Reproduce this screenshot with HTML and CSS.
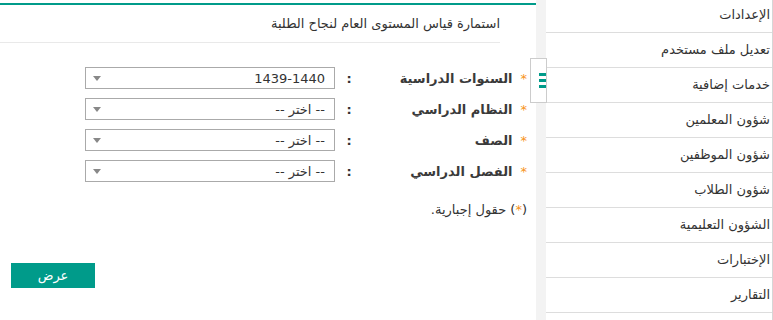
FILE: index.html
```html
<!DOCTYPE html>
<html lang="ar" dir="rtl">
  <head>
    <meta charset="UTF-8" />
    <title>استمارة قياس المستوى العام لنجاح الطلبة</title>
    <link rel="stylesheet" href="styles.css">
  </head>
  <body>
    <div class="page">
      <aside class="sidebar">
        <ul>
          <li><a href="#">الإعدادات</a></li>
          <li><a href="#">تعديل ملف مستخدم</a></li>
          <li><a href="#">خدمات إضافية</a></li>
          <li><a href="#">شؤون المعلمين</a></li>
          <li><a href="#">شؤون الموظفين</a></li>
          <li><a href="#">شؤون الطلاب</a></li>
          <li><a href="#">الشؤون التعليمية</a></li>
          <li><a href="#">الإختبارات</a></li>
          <li><a href="#">التقارير</a></li>
        </ul>
      </aside>

      <div class="gutter"></div>

      <main class="panel">
        <div class="panel-head">
          <h1>استمارة قياس المستوى العام لنجاح الطلبة</h1>
        </div>

        <form class="form">
          <div class="row">
            <label><span class="req">*</span>السنوات الدراسية</label>
            <span class="colon">:</span>
            <div class="select">
              <span>1439-1440</span>
              <span class="arrow"></span>
            </div>
          </div>
          <div class="row">
            <label><span class="req">*</span>النظام الدراسي</label>
            <span class="colon">:</span>
            <div class="select">
              <span>-- اختر --</span>
              <span class="arrow"></span>
            </div>
          </div>
          <div class="row">
            <label><span class="req">*</span>الصف</label>
            <span class="colon">:</span>
            <div class="select">
              <span>-- اختر --</span>
              <span class="arrow"></span>
            </div>
          </div>
          <div class="row">
            <label><span class="req">*</span>الفصل الدراسي</label>
            <span class="colon">:</span>
            <div class="select">
              <span>-- اختر --</span>
              <span class="arrow"></span>
            </div>
          </div>

          <p class="note">(<span class="req">*</span>) حقول إجبارية.</p>

          <div class="actions">
            <button type="button" class="btn">عرض</button>
          </div>
        </form>
      </main>

      <button type="button" class="toggle">
        <span></span><span></span><span></span>
      </button>
    </div>
  </body>
</html>
```

FILE: styles.css
```css
:root {
  --primary-color: #009b8a;
  --text-color: #333;
  --border-color: #ddd;
  --gutter-color: #f3f3f3;
}

* {
  box-sizing: border-box;
  margin: 0;
  padding: 0;
}

body {
  font-family: "DejaVu Sans", sans-serif;
  font-size: 13px;
  color: var(--text-color);
  background-color: #fff;
  overflow: hidden;
}

.page {
  position: relative;
  display: flex;
  height: 320px;
}

/* sidebar */
.sidebar {
  width: 227px;
  flex-shrink: 0;
  border-right: 1px solid #d6d6d6;
  background-color: #fff;
}

.sidebar ul {
  list-style: none;
  margin-top: -2px;
}

.sidebar li {
  height: 35px;
  line-height: 34px;
  border-bottom: 1px solid var(--border-color);
  padding-right: 2px;
}

.sidebar a {
  color: var(--text-color);
  text-decoration: none;
  font-size: 13px;
}

.gutter {
  width: 10px;
  flex-shrink: 0;
  background-color: var(--gutter-color);
}

/* main panel */
.panel {
  width: 536px;
  flex-shrink: 0;
  margin-top: 3px;
  border-top: 2px solid var(--primary-color);
  background-color: #fff;
}

.panel-head {
  height: 38px;
  margin-right: 36px;
  border-bottom: 1px solid #e9e9e9;
  display: flex;
  align-items: center;
}

.panel-head h1 {
  font-size: 13px;
  font-weight: normal;
  color: #333;
  padding-bottom: 1px;
}

.form {
  padding-top: 24px;
  padding-right: 9px;
}

.row {
  display: flex;
  align-items: center;
  margin-bottom: 9px;
}

.row label {
  width: 165px;
  font-weight: bold;
  font-size: 13px;
  color: #3a3a3a;
}

.req {
  color: #f7941d;
  font-weight: normal;
  margin-left: 8px;
}

.colon {
  width: 26px;
  text-align: center;
  font-weight: bold;
}

.select {
  width: 250px;
  height: 22px;
  margin-right: 1px;
  border: 1px solid #aaa;
  display: flex;
  align-items: center;
  justify-content: space-between;
  padding: 0 9px 0 7px;
  font-size: 13px;
  color: #333;
}

.arrow {
  width: 0;
  height: 0;
  border-left: 4px solid transparent;
  border-right: 4px solid transparent;
  border-top: 5px solid #888;
}

.note {
  margin-top: 20px;
  font-size: 13px;
  color: #333;
}

.note .req {
  margin: 0;
}

.actions {
  margin-top: 46px;
  padding-left: 11px;
  display: flex;
  justify-content: flex-end;
}

.btn {
  width: 84px;
  height: 25px;
  border: none;
  background-color: var(--primary-color);
  color: #fff;
  font-family: "DejaVu Sans", sans-serif;
  font-size: 13px;
  cursor: pointer;
}

/* menu toggle laid over the panel edge */
.toggle {
  position: absolute;
  top: 58px;
  left: 530px;
  width: 17px;
  height: 45px;
  border: 1px solid #ccc;
  background-color: #fff;
  display: flex;
  flex-direction: column;
  align-items: flex-start;
  justify-content: center;
  gap: 3px;
  overflow: hidden;
}

.toggle span {
  display: block;
  width: 8px;
  height: 3px;
  margin-right: -1px;
  background-color: var(--primary-color);
}
```
